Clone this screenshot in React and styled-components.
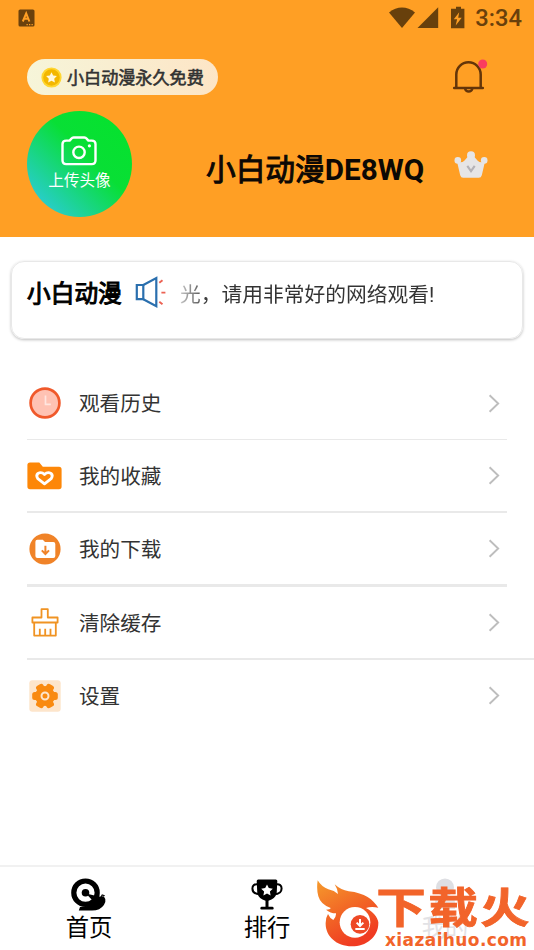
import React from 'react';
import styled, { createGlobalStyle } from "styled-components";

const menu = [
    { name: "观看历史", icon: <ClockIcon />, height: 73, line: 1 },
    { name: "我的收藏", icon: <HeartFolderIcon />, height: 73, line: 2 },
    { name: "我的下载", icon: <DownloadIcon />, height: 74, line: 3 },
    { name: "清除缓存", icon: <BrushIcon />, height: 73, line: 2, wide: true },
    { name: "设置", icon: <GearIcon />, height: 71, line: 0 },
]

export default function App() {
    return (
        <Page>
            <GlobalStyle />
            <Header>
                <StatusBar>
                    <KeyboardIcon />
                    <StatusRight>
                        <StatusIcons />
                        <Clock>3:34</Clock>
                    </StatusRight>
                </StatusBar>
                <TopRow>
                    <Pill>
                        <CoinIcon />
                        <span>小白动漫永久免费</span>
                    </Pill>
                    <BellIcon />
                </TopRow>
                <Profile>
                    <Avatar>
                        <CameraIcon />
                        <p>上传头像</p>
                    </Avatar>
                    <UserName><span>小白动漫</span>DE8WQ</UserName>
                    <CrownIcon />
                </Profile>
            </Header>
            <Notice>
                <NoticeTitle>小白动漫</NoticeTitle>
                <SpeakerIcon />
                <NoticeText>光，请用非常好的网络观看!</NoticeText>
            </Notice>
            <Menu>
                {menu.map((item) => (
                    <MenuRow key={item.name} $height={item.height} $line={item.line} $wide={item.wide}>
                        <IconBox>{item.icon}</IconBox>
                        <MenuName>{item.name}</MenuName>
                        <Arrow />
                    </MenuRow>
                ))}
            </Menu>
            <TabBar>
                <Tab>
                    <SnailIcon />
                    <p>首页</p>
                </Tab>
                <Tab>
                    <TrophyIcon />
                    <p>排行</p>
                </Tab>
                <Tab $faded>
                    <PersonIcon />
                    <p>我的</p>
                </Tab>
            </TabBar>
            <Watermark>
                <FlameIcon />
                <WatermarkText>
                    <SiteName>
                        <span>下</span>
                        <span>载</span>
                        <span>火</span>
                    </SiteName>
                    <SiteUrl>xiazaihuo.com</SiteUrl>
                </WatermarkText>
            </Watermark>
        </Page>
    )
}

function KeyboardIcon() {
    return (
        <svg width="17" height="18" viewBox="0 0 17 18">
            <rect x="0.5" y="0.5" width="16" height="17" rx="1.6" fill="#6b410c" />
            <path d="M4.8 12.5 8.2 4.4 11.4 12.5M6 9.8h4.6" fill="none" stroke="#ff9f24" strokeWidth="2" />
            <path d="M8.5 15.6h1.3M11 15.6h1.3M13.5 15.6h1.3" stroke="#ff9f24" strokeWidth="1.2" />
        </svg>
    )
}

function StatusIcons() {
    return (
        <svg width="78" height="24" viewBox="0 0 78 24">
            <g fill="#68400c">
                <path d="M0 6.4C8-0.2 18-0.2 26 6.4L13 22Z" />
                <path d="M49.2 1.3V22H28.5Z" />
                <path d="M67 0.8h5v2h3.4v19.4H62V2.8h5Z" />
            </g>
            <path d="M70.2 6.2 64.8 13.2h3.3l-1.4 6.2 6-7.6h-3.5Z" fill="#ff9f24" />
        </svg>
    )
}

function CoinIcon() {
    return (
        <svg width="21" height="21" viewBox="0 0 21 21">
            <circle cx="10.5" cy="10.5" r="9.2" fill="#f3b700" stroke="#ffd630" strokeWidth="1.8" />
            <path d="m10.5 5.2 1.7 3.4 3.7.5-2.7 2.7.7 3.7-3.4-1.8-3.4 1.8.7-3.7-2.7-2.7 3.7-.5Z" fill="#fff8dc" />
        </svg>
    )
}

function BellIcon() {
    return (
        <svg width="36" height="36" viewBox="0 0 36 36">
            <g fill="none" stroke="#643509" strokeWidth="2.5" strokeLinecap="round">
                <path d="M4.3 29.3V16.4a12.2 12.2 0 0 1 24.4 0v12.9" />
                <path d="M2.2 30h28.6" />
                <path d="M13.2 31a3.6 3.2 0 0 0 7 0" />
            </g>
            <circle cx="30.7" cy="6" r="4.5" fill="#fa3c5e" />
        </svg>
    )
}

function CameraIcon() {
    return (
        <svg width="36" height="30" viewBox="0 0 36 30">
            <g fill="none" stroke="#fff" strokeWidth="2.4" strokeLinejoin="round">
                <path d="M8.6 4.6 10.4 2.6q.8-1.1 2.2-1.1h10.8q1.4 0 2.2 1.1l1.8 2h3.4q3.7 0 3.7 3.5v16.2q0 3.8-3.7 3.8H5.2q-3.7 0-3.7-3.8V8.1q0-3.5 3.7-3.5Z" />
                <circle cx="18" cy="16.3" r="5.7" />
            </g>
            <circle cx="28.4" cy="9.8" r="1.6" fill="#fff" />
        </svg>
    )
}

function CrownIcon() {
    return (
        <svg width="34" height="28" viewBox="0 0 34 28">
            <g fill="#e6e5e6">
                <circle cx="17" cy="4.3" r="4" />
                <circle cx="3.8" cy="9.4" r="3.3" />
                <circle cx="30.2" cy="9.4" r="3.3" />
                <path d="M3 10.5q4.5 2 7.3-.7L14 5.5h6l3.7 4.3q2.8 2.7 7.3.7l-3.2 13.8q-.7 2.5-3 2.5H9.2q-2.3 0-3-2.5Z" />
            </g>
            <path d="m13.3 14.8 3.7 5.4 3.7-5.4" fill="none" stroke="#b4b2b7" strokeWidth="2.1" />
        </svg>
    )
}

function SpeakerIcon() {
    return (
        <svg width="32" height="32" viewBox="0 0 32 32">
            <g fill="none" stroke="#2a6fae" strokeWidth="2.2">
                <path d="M1.8 9h6.5v14.2H1.8Z" />
                <path d="M8.3 9 21.3 2.1v28L8.3 23.2" />
            </g>
            <path d="m24.3 6.8 3.2-2.5M26.4 16.6h4M24.3 25.7l3.2 2.5" stroke="#ec6253" strokeWidth="1.9" />
        </svg>
    )
}

function ClockIcon() {
    return (
        <svg width="32" height="32" viewBox="0 0 32 32">
            <circle cx="16" cy="16" r="14.4" fill="#ffc2b3" stroke="#f0592b" strokeWidth="2.7" />
            <path d="M16.5 8.5v8.8h5.3" fill="none" stroke="#ffe5df" strokeWidth="1.7" />
        </svg>
    )
}

function HeartFolderIcon() {
    return (
        <svg width="35" height="28" viewBox="0 0 35 28">
            <path d="M3 .5h9.3l3.5 4.3H32q2.6 0 2.6 2.6v17.2q0 2.7-2.6 2.7H3q-2.6 0-2.6-2.7V3Q.4.5 3 .5Z" fill="#fd8708" />
            <path d="M17.5 21.9 10.8 16.6q-2.2-3 .2-5.2 3.4-2 6.5 1.1 3.1-3.1 6.5-1.1 2.4 2.2.2 5.2Z" fill="none" stroke="#fff" strokeWidth="2.8" strokeLinejoin="round" />
        </svg>
    )
}

function DownloadIcon() {
    return (
        <svg width="32" height="32" viewBox="0 0 32 32">
            <circle cx="16" cy="16" r="15.6" fill="#f08328" />
            <path d="M8.4 6.7h5.4l2.2 2.2h8.3q2 0 2 2v12q0 2-2 2H8.4q-2 0-2-2V8.7q0-2 2-2Z" fill="#fff" />
            <path d="M16.4 12.7v8M12.8 17.4l3.6 3.6 3.6-3.6" fill="none" stroke="#f08328" strokeWidth="2" />
        </svg>
    )
}

function BrushIcon() {
    return (
        <svg width="28" height="29" viewBox="0 0 28 29">
            <g fill="none" stroke="#f09323" strokeWidth="1.8" strokeLinejoin="round">
                <path d="M10.5 9.5V1.2h6.3v8.3h9.8v5H1.4v-5Z" />
                <path d="M3.2 14.5v13.1h21.6V14.5" />
                <path d="M8.8 27.5v-6.8M14.2 27.5v-6.8M19.5 27.5v-6.8" />
            </g>
        </svg>
    )
}

function GearIcon() {
    return (
        <svg width="32" height="32" viewBox="0 0 32 32">
            <rect x="0.3" y="0.3" width="31.4" height="31.4" rx="3" fill="#fde5cb" />
            <g fill="#f98a10">
                <circle cx="16" cy="16" r="10" />
                {[0, 60, 120].map((deg) => (
                    <rect key={deg} x="3.2" y="12" width="25.6" height="8" rx="2.5" transform={`rotate(${deg} 16 16)`} />
                ))}
            </g>
            <circle cx="16" cy="16" r="3.5" fill="#f98a10" stroke="#fde5cb" strokeWidth="2" />
        </svg>
    )
}

function Arrow() {
    return (
        <svg width="12" height="19" viewBox="0 0 12 19">
            <path d="m1.6 1.2 8.6 8.3-8.6 8.3" fill="none" stroke="#bdbdbd" strokeWidth="1.9" />
        </svg>
    )
}

function SnailIcon() {
    return (
        <svg width="36" height="33" viewBox="0 0 36 33">
            <circle cx="14.5" cy="14.7" r="11.7" fill="#fff" stroke="#000" strokeWidth="5.2" />
            <circle cx="14.5" cy="14.7" r="3.8" />
            <path d="m15 15.5 9.5 2.2-1.8 6Z" />
            <path d="M9 29q9 0 14-5 2.6-5.5 6.7-5.4l3-.3 1.6 2.6q.7 3-1.4 6-3.7 5.5-11.9 5.5H7.8Z" />
            <path d="m30 19 1.2-2 2.5.8" fill="none" stroke="#000" strokeWidth="1.1" />
        </svg>
    )
}

function TrophyIcon() {
    return (
        <svg width="32" height="31" viewBox="0 0 32 31">
            <path d="M7 5.4Q1.4 4.8 1.4 9.5q0 5.5 7.6 5.8M25 5.4q5.6-.6 5.6 4.1 0 5.5-7.6 5.8" fill="none" stroke="#000" strokeWidth="2" />
            <path d="M7.2.5h17.6q1.5 0 1.5 1.5l-.6 12.3q-1.6 5.8-8.2 7.4v6h4q1.2 0 1.2 1.5t-1.2 1.4h-11q-1.2 0-1.2-1.4t1.2-1.5h4v-6q-6.6-1.6-8.2-7.4L5.7 2Q5.7.5 7.2.5Z" />
            <path d="m16 5.4 1.8 3.7 4 .6-2.9 2.8.7 4-3.6-1.9-3.6 1.9.7-4-2.9-2.8 4-.6Z" fill="#fff" />
        </svg>
    )
}

function PersonIcon() {
    return (
        <svg width="26" height="33" viewBox="0 0 26 33">
            <circle cx="13" cy="9.4" r="9" fill="#dedfe3" />
            <path d="M3 31v-6q0-7 7-7h6q7 0 7 7v6Z" fill="#e7e7ea" />
        </svg>
    )
}

function FlameIcon() {
    return (
        <svg width="63" height="67" viewBox="50 60 189 201">
            <defs>
                <linearGradient id="flame" x1="0" y1="0" x2="0.5" y2="1">
                    <stop offset="0" stopColor="#f59a2c" />
                    <stop offset="0.5" stopColor="#f26a26" />
                    <stop offset="1" stopColor="#f03b22" />
                </linearGradient>
            </defs>
            <path d="M52 61Q64 81 84 88Q102 92 113 102Q112 87 103 73Q121 90 145 94C194 99 218 119 234 143Q212 139 197 144C220 156 231 171 234 187C235 231 197 259 155 259C106 259 74 226 76 188Q77 171 83 162Q88 174 99 180Q108 170 107 160Q90 160 77 149Q90 149 91 144Q61 134 54 109Q48 88 52 61Z" fill="url(#flame)" />
            <ellipse cx="164" cy="187" rx="46" ry="46" fill="#fff" />
            <circle cx="179" cy="193" r="28" fill="#ee4926" />
            <path d="M179 177v19M169 188l10 10 10-10M165 207h28" fill="none" stroke="#fff" strokeWidth="6" />
        </svg>
    )
}

const GlobalStyle = createGlobalStyle`
    body {
        margin: 0;
        background-color: #fff;
    }
    p {
        margin: 0;
    }
    svg {
        display: block;
        flex-shrink: 0;
    }
    `
const Page = styled.div`
    position: relative;
    display: flex;
    flex-direction: column;
    width: 534px;
    height: 950px;
    overflow: hidden;
    background-color: #fff;
    color: #333;
    font-family: Roboto, 'Noto Sans CJK SC', sans-serif;
    `
const Header = styled.div`
    height: 237px;
    flex-shrink: 0;
    background-color: #ff9f24;
    `
const StatusBar = styled.div`
    display: flex;
    justify-content: space-between;
    align-items: center;
    height: 37px;
    box-sizing: border-box;
    padding: 0 12px 0 18px;
    & > svg {
        margin-top: -2px;
    }
    `
const StatusRight = styled.div`
    display: flex;
    align-items: center;
    gap: 8px;
    svg {
        margin-top: -1px;
    }
    `
const Clock = styled.div`
    font-size: 23.7px;
    font-weight: 500;
    line-height: 37px;
    color: #68400c;
    `
const TopRow = styled.div`
    display: flex;
    justify-content: space-between;
    padding: 21px 46px 0 27px;
    height: 53px;
    box-sizing: border-box;
    `
const Pill = styled.div`
    display: flex;
    align-items: center;
    gap: 5px;
    width: 191px;
    height: 36px;
    margin-top: 1px;
    padding-left: 14px;
    box-sizing: border-box;
    border-radius: 18px;
    background: linear-gradient(90deg, #f6f5d9, #fde5c6);
    color: #333;
    font-size: 17.1px;
    -webkit-text-stroke: 0.6px #333;
    white-space: nowrap;
    span {
        margin-top: -1px;
    }
    `
const Profile = styled.div`
    display: flex;
    padding: 21px 0 0 27px;
    `
const Avatar = styled.div`
    display: flex;
    flex-direction: column;
    align-items: center;
    width: 105px;
    height: 106px;
    padding-top: 25px;
    box-sizing: border-box;
    border-radius: 50%;
    background: linear-gradient(45deg, #2ccbdc 8%, #08df35 58%, #05e32c);
    color: #fff;
    font-size: 15.6px;
    line-height: 30px;
    svg {
        margin-left: -1px;
    }
    `
const UserName = styled.div`
    width: 248px;
    padding: 37px 0 0 74px;
    box-sizing: border-box;
    font-size: 29.7px;
    font-weight: 700;
    line-height: 44px;
    color: #0c0804;
    white-space: nowrap;
    span {
        font-weight: 400;
        -webkit-text-stroke: 1px #0c0804;
    }
    & + svg {
        margin: 40px 0 0 74px;
    }
    `
const Notice = styled.div`
    display: flex;
    align-items: flex-start;
    flex-shrink: 0;
    height: 78px;
    margin: 24px 11px 0 11px;
    padding: 15px 15px 0 15px;
    box-sizing: border-box;
    border: 1px solid #e8e8e8;
    border-radius: 13px;
    box-shadow: 0 1px 3px rgba(0, 0, 0, 0.26);
    & > svg {
        margin-top: -1px;
    }
    `
const NoticeTitle = styled.div`
    width: 108px;
    font-size: 23.7px;
    line-height: 34px;
    color: #000;
    -webkit-text-stroke: 1px #000;
    `
const NoticeText = styled.div`
    margin-left: 13px;
    font-size: 20.75px;
    line-height: 36px;
    white-space: nowrap;
    background: linear-gradient(90deg, #c8c8c8, #333 28px);
    background-clip: text;
    color: transparent;
    `
const Menu = styled.div`
    padding-top: 28px;
    `
const MenuRow = styled.div`
    display: flex;
    align-items: center;
    height: ${(props) => props.$height}px;
    box-sizing: border-box;
    margin-left: 27px;
    margin-right: ${(props) => props.$wide ? 0 : 27}px;
    padding-right: ${(props) => props.$wide ? 34 : 7}px;
    border-bottom: ${(props) => props.$line}px solid #e9e9e9;
    `
const IconBox = styled.div`
    display: flex;
    justify-content: center;
    width: 35px;
    margin-right: 17px;
    `
const MenuName = styled.div`
    flex: 1;
    padding-top: 2px;
    font-size: 20.6px;
    line-height: 30px;
    `
const TabBar = styled.div`
    display: flex;
    height: 85px;
    flex-shrink: 0;
    margin-top: auto;
    box-sizing: border-box;
    border-top: 2px solid #f1f1f1;
    `
const Tab = styled.div`
    display: flex;
    flex: 1;
    flex-direction: column;
    align-items: center;
    padding-top: 11px;
    font-size: 23.3px;
    line-height: 34px;
    color: ${(props) => props.$faded ? "#e2e2e5" : "#000"};
    svg {
        height: 33px;
    }
    `
const Watermark = styled.div`
    position: absolute;
    left: 317px;
    bottom: 1px;
    display: flex;
    `
const WatermarkText = styled.div`
    display: flex;
    flex-direction: column;
    padding-top: 8px;
    color: #f2642a;
    `
const SiteName = styled.div`
    display: flex;
    width: 142px;
    height: 43px;
    margin-left: -3px;
    font-size: 42px;
    font-weight: 700;
    line-height: 42px;
    -webkit-text-stroke: 0.8px #f2642a;
    transform: scaleX(1.18);
    transform-origin: 4px 0;
    span {
        width: 44px;
    }
    `
const SiteUrl = styled.div`
    padding-left: 5px;
    font-family: 'DejaVu Sans', sans-serif;
    font-size: 17px;
    font-weight: 700;
    line-height: 18px;
    letter-spacing: 0.4px;
    `
